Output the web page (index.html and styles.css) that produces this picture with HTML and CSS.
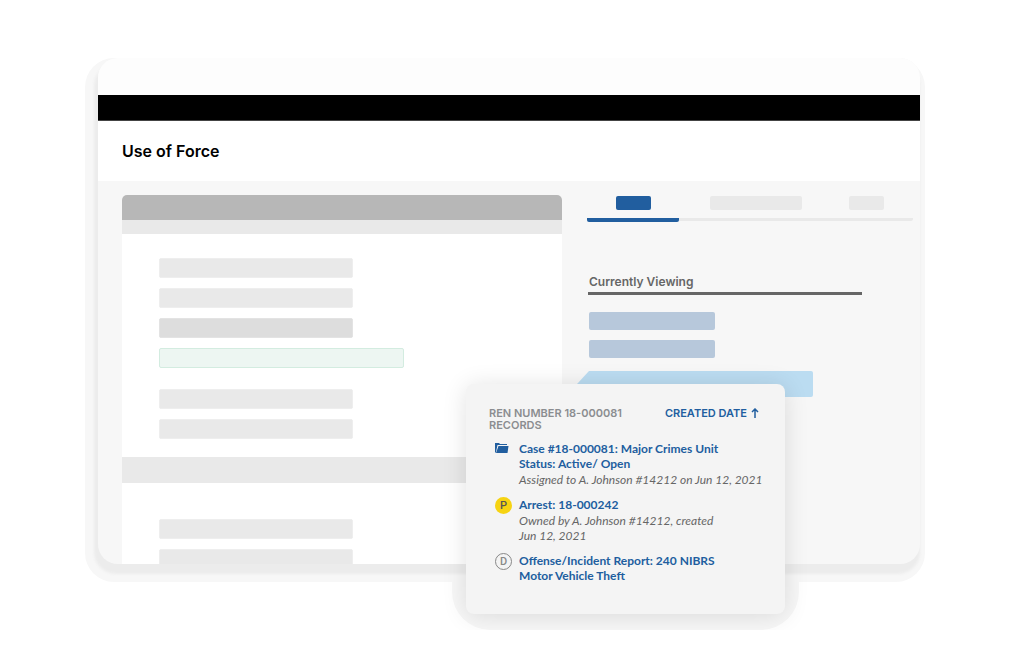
FILE: index.html
```
<!DOCTYPE html>
<html lang="en">
<head>
  <meta charset="utf-8">
  <title>Use of Force</title>
  <link rel="stylesheet" href="styles.css">
</head>
<body>
  <div class="scene">
    <div class="popup-halo"></div>

    <div class="window">
      <div class="window-top"></div>
      <div class="nav-bar"></div>
      <header class="page-header">
        <h1>Use of Force</h1>
      </header>

      <main class="content">
        <section class="panel">
          <div class="panel-head"></div>
          <div class="panel-subhead"></div>
          <div class="rows">
            <div class="row"></div>
            <div class="row"></div>
            <div class="row dark"></div>
            <div class="row green"></div>
          </div>
          <div class="rows second">
            <div class="row"></div>
            <div class="row"></div>
          </div>
          <div class="band"></div>
          <div class="rows third">
            <div class="row"></div>
            <div class="row"></div>
          </div>
        </section>

        <aside class="side">
          <div class="tabs">
            <div class="tab active"><span class="tab-label"></span></div>
            <div class="tab wide"><span class="tab-label"></span></div>
            <div class="tab small"><span class="tab-label"></span></div>
          </div>
          <h2>Currently Viewing</h2>
          <div class="viewing">
            <div class="item"></div>
            <div class="item"></div>
          </div>
          <div class="callout"></div>
        </aside>
      </main>
    </div>

    <!-- Records popup -->
    <section class="popup">
      <div class="popup-header">
        <h3>REN NUMBER 18-000081<br>RECORDS</h3>
        <button class="sort" type="button">CREATED DATE
          <svg width="8" height="10" viewBox="0 0 8 10"><path d="M4 10V1M1 4l3-3 3 3" fill="none" stroke="currentColor" stroke-width="1.5"/></svg>
        </button>
      </div>
      <ul class="records">
        <li>
          <svg class="icon folder" width="17" height="17" viewBox="0 0 17 17"><path d="M0 12V2h4l1 1h7v1H2.500L1 11z" fill="#215e9f"/><path d="M3.500 5H13.500L12.500 12H1z" fill="#215e9f"/></svg>
          <div>
            <a href="#">Case #18-000081: Major Crimes Unit<br>Status: Active/ Open</a>
            <p>Assigned to A. Johnson #14212 on Jun 12, 2021</p>
          </div>
        </li>
        <li>
          <span class="icon badge yellow">P</span>
          <div>
            <a href="#">Arrest: 18-000242</a>
            <p>Owned by A. Johnson #14212, created<br>Jun 12, 2021</p>
          </div>
        </li>
        <li>
          <span class="icon badge outline">D</span>
          <div>
            <a href="#">Offense/Incident Report: 240 NIBRS<br>Motor Vehicle Theft</a>
          </div>
        </li>
      </ul>
    </section>
  </div>
</body>
</html>
```
FILE: styles.css
```
* {
  box-sizing: border-box;
}

body {
  margin: 0;
  background-color: #fff;
  font-family: Inter, "Liberation Sans", sans-serif;
}

h1, h2, h3, p, ul {
  margin: 0;
  padding: 0;
}

.scene {
  position: relative;
  padding: 58px 98px 94px;
}

.window {
  position: relative;
  background-color: #f7f7f7;
  border-radius: 20px;
  box-shadow: -2px 8px 3px 2px #ececec, -4px 9px 0 9px #f7f7f7;
  overflow: hidden;
}

.window-top {
  height: 37px;
  background-color: #fdfdfd;
}

.nav-bar {
  height: 26px;
  background-color: #000;
  border-bottom: 1px solid #444;
}

.page-header {
  padding: 20px 24px;
  background-color: #fff;
}

.page-header h1 {
  font-size: 16px;
  line-height: 20px;
  font-weight: 600;
  color: #000;
}

.content {
  display: flex;
  gap: 25px;
  height: 383px;
  padding: 14px 7px 0 24px;
}

/* Left panel */
.panel {
  flex: 440;
  background-color: #fff;
  border-radius: 5px 5px 0 0;
  overflow: hidden;
}

.panel-head {
  height: 25px;
  background-color: #b7b7b7;
}

.panel-subhead {
  height: 14px;
  background-color: #e9e9e9;
}

.rows {
  display: flex;
  flex-direction: column;
  gap: 10px;
  padding: 24px 37px 0;
}

.rows.second {
  padding-top: 21px;
}

.rows.third {
  padding-top: 36px;
}

.row {
  width: 194px;
  height: 20px;
  background-color: #e9e9e9;
  border: 1px solid #eee;
  border-radius: 2px;
}

.row.dark {
  background-color: #ddd;
  border-color: #e3e3e3;
}

.row.green {
  width: 245px;
  background-color: #edf6f2;
  border-color: #d3ece0;
}

.band {
  height: 26px;
  margin-top: 18px;
  background-color: #e9e9e9;
}

/* Right column */
.side {
  flex: 326;
}

.tabs {
  display: flex;
  gap: 31px;
  height: 26px;
  border-bottom: 3px solid #e9e9e9;
  border-radius: 2px;
}

.tab {
  display: flex;
  justify-content: center;
  width: 92px;
  height: 27px;
  padding-top: 1px;
}

.tab.small {
  width: 66px;
}

.tab-label {
  width: 35px;
  height: 14px;
  background-color: #e9e9e9;
  border-radius: 2px;
}

.tab.wide .tab-label {
  width: 92px;
}

.tab.active {
  border-bottom: 4px solid #215e9f;
  border-radius: 2px;
}

.tab.active .tab-label {
  background-color: #215e9f;
}

.side h2 {
  margin: 52px 51px 0 1px;
  padding: 0 1px 1px;
  border-bottom: 3px solid #666;
  font-size: 12px;
  line-height: 18px;
  font-weight: 600;
  color: #666;
}

.viewing {
  display: flex;
  flex-direction: column;
  gap: 10px;
  padding: 17px 2px 0;
}

.item {
  width: 126px;
  height: 18px;
  background-color: #b7c8db;
  border-radius: 2px;
}

.callout {
  height: 26px;
  margin: 13px 100px 0 -10px;
  background-color: #bbdcf1;
  border-radius: 2px;
  clip-path: polygon(12px 0, 100% 0, 100% 100%, 12px 100%, 0 13px);
}

/* Popup over the window */
.popup {
  position: absolute;
  top: 384px;
  left: 466px;
  width: 319px;
  height: 230px;
  padding: 23px 26px 23px 23px;
  background-color: #f4f4f4;
  border-radius: 8px;
  box-shadow: 0 2px 24px rgba(0, 0, 0, 0.12);
  clip-path: inset(-24px -24px -16px);
}

.popup-halo {
  position: absolute;
  top: 384px;
  left: 466px;
  width: 319px;
  height: 230px;
  border-radius: 24px;
  box-shadow: 0 2px 0 14px #f7f7f7;
}

.popup-header {
  display: flex;
  justify-content: space-between;
  align-items: flex-start;
}

.popup-header h3 {
  font-size: 11px;
  line-height: 12px;
  font-weight: 600;
  color: #8b8d90;
}

.sort {
  display: flex;
  align-items: center;
  gap: 4px;
  padding: 0;
  border: none;
  background: none;
  font-family: inherit;
  font-size: 11px;
  line-height: 12px;
  font-weight: 600;
  color: #215e9f;
  cursor: pointer;
}

.records {
  display: flex;
  flex-direction: column;
  gap: 10px;
  padding-top: 10px;
  list-style: none;
  font-family: Lato, "Noto Sans", sans-serif;
  font-size: 12px;
  line-height: 15px;
}

.records li {
  display: flex;
  gap: 7px;
  padding-left: 6px;
  white-space: nowrap;
}

.records a {
  font-weight: 700;
  color: #215e9f;
  text-decoration: none;
}

.records p {
  margin-top: 1px;
  font-style: italic;
  color: #666;
}

.icon {
  flex: none;
  width: 17px;
  height: 17px;
}

.badge {
  border-radius: 50%;
  font-family: Roboto, sans-serif;
  font-size: 11px;
  line-height: 17px;
  font-weight: 500;
  text-align: center;
  color: #555;
}

.badge.yellow {
  background-color: #f6d312;
}

.badge.outline {
  border: 1px solid #888;
  line-height: 15px;
  color: #888;
}
```
